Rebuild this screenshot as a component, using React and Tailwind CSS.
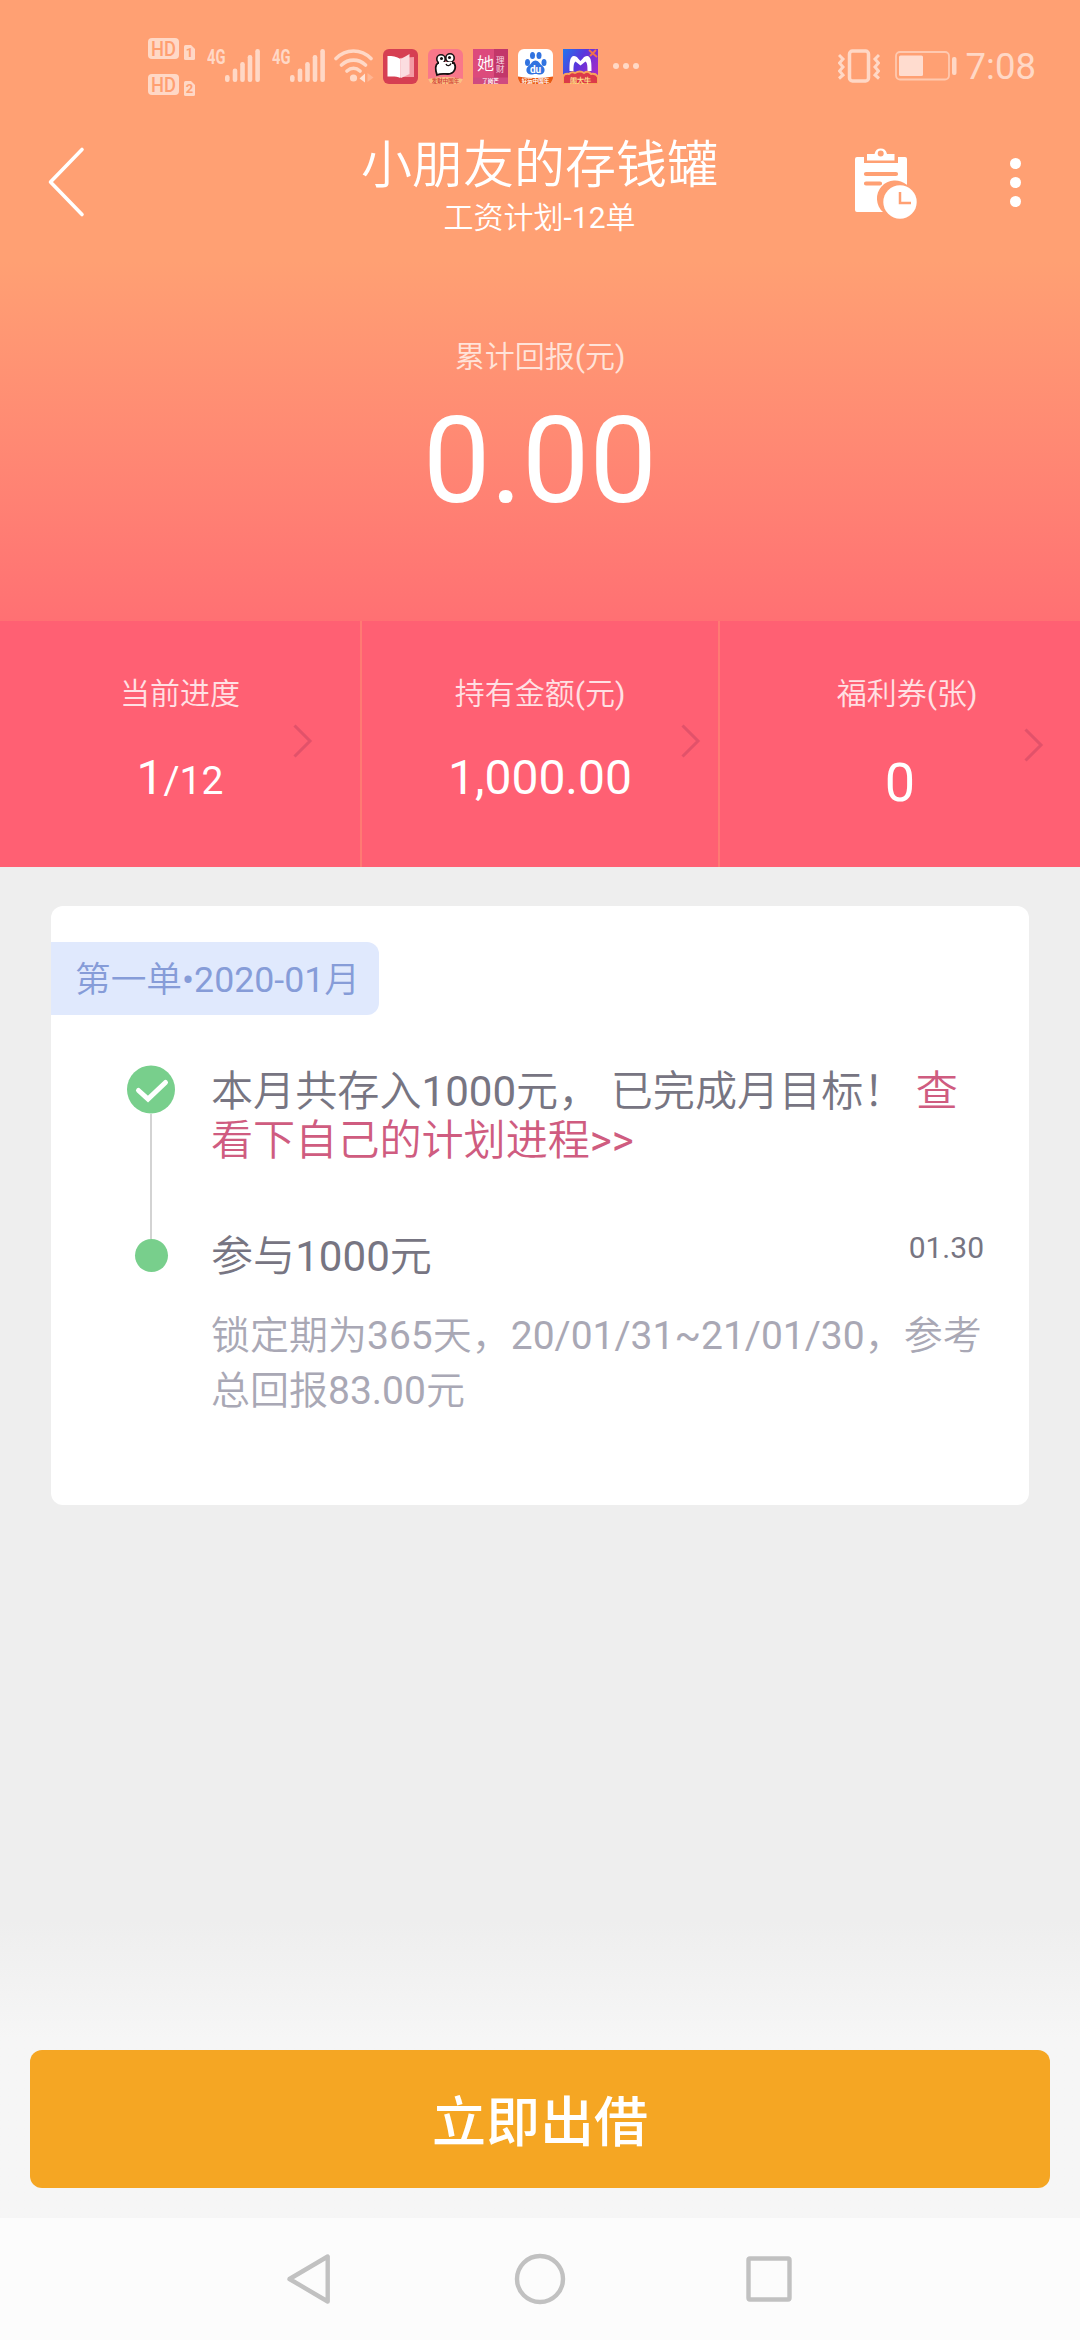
function HdBadge({ sim }) {
  return (
    <svg width="48" height="22" viewBox="0 0 48 22">
      <rect width="31" height="21" rx="4" fill="#ffd8c6" />
      <text x="15.5" y="17.5" textAnchor="middle" fontSize="20" fontWeight="500" textLength="25" lengthAdjust="spacingAndGlyphs" fill="#ff9f71">
        HD
      </text>
      <path d="M37.5 7H43l4 4v9.500a1.500 1.500 0 0 1-1.500 1.500h-8A1.500 1.500 0 0 1 36 20.500v-12A1.500 1.500 0 0 1 37.500 7Z" fill="#ffd8c6" />
      <text x="41.500" y="19" textAnchor="middle" fontSize="13" fontWeight="700" fill="#ff9f71">
        {sim}
      </text>
    </svg>
  );
}

function Signal() {
  return (
    <div className="flex h-[34px] w-[53px]">
      <svg width="53" height="44" viewBox="0 -6 53 44" className="-mt-[6px] shrink-0" fill="#ffd8c6">
        <text x="0" y="14.500" fontSize="20" fontWeight="700" textLength="18.500" lengthAdjust="spacingAndGlyphs">
          4G
        </text>
        <rect x="18" y="26" width="4.600" height="7" rx="2.200" />
        <rect x="25.700" y="19.500" width="4.600" height="13.500" rx="2.200" />
        <rect x="33.200" y="13" width="4.600" height="20" rx="2.200" />
        <rect x="40.700" y="6" width="4.600" height="27" rx="2.200" />
        <rect x="48.300" y="0" width="4.600" height="33" rx="2.200" />
      </svg>
    </div>
  );
}

function Wifi() {
  return (
    <svg width="40" height="34" viewBox="0 0 40 34" fill="none" stroke="#ffd8c6" strokeWidth="3.600" strokeLinecap="round">
      <path d="M2 9.500C12-.5 27-.5 37 9.500M7.500 16c7-6.500 17-6.500 24 0M13 22c4-3.500 9-3.500 13 0" />
      <circle cx="19.500" cy="29" r="3.600" fill="#ffd8c6" stroke="none" />
      <path d="M25.500 29.500l5.500-5v9Z" fill="#ffe3d6" stroke="none" />
      <path d="M39.500 28.500l-6-4.500v9Z" fill="#ffb592" stroke="none" />
    </svg>
  );
}

function AppIcons() {
  return (
    <div className="flex gap-[10px]">
      <svg width="35" height="35" viewBox="0 0 35 35">
        <rect width="35" height="35" rx="6" fill="#d63f52" />
        <path d="M17 9l14-1v20H17Z" fill="#f39ba3" />
        <path d="M4.500 7c5 0 9 .5 13 3v19c-4-2-8-1.500-13-1.500Z" fill="#fff" />
        <path d="M18 10l8.500-5v20L18 29Z" fill="#fbdde0" />
      </svg>
      <svg width="35" height="35" viewBox="0 0 35 35">
        <clipPath id="frog"><rect width="35" height="35" rx="6" /></clipPath>
        <g clipPath="url(#frog)">
          <rect width="35" height="35" fill="#f9778a" />
          <path d="M9 26c-2-6-2-10 1-12h16c3 5 0 11-6 11-4 0-7-1-11 1Z" fill="#fff" stroke="#171112" strokeWidth="1.800" />
          <circle cx="13" cy="10" r="4.200" fill="#fff" stroke="#171112" strokeWidth="1.600" />
          <circle cx="22" cy="9" r="4.200" fill="#fff" stroke="#171112" strokeWidth="1.600" />
          <path d="M11 13h13v5H11Z" fill="#fff" />
          <circle cx="13.500" cy="9.500" r="1.500" fill="#171112" />
          <circle cx="21.500" cy="8.500" r="1.500" fill="#171112" />
          <path d="M18 15c1 2.500 4 2 5-.5" stroke="#171112" strokeWidth="1.400" fill="none" />
          <path d="M0 30q17-4 35 0v5H0Z" fill="#fbc182" />
          <text x="17.500" y="34" textAnchor="middle" fontSize="5.500" fontWeight="700" fill="#d4453c">发财中国年</text>
        </g>
      </svg>
      <svg width="35" height="35" viewBox="0 0 35 35">
        <rect width="35" height="35" fill="#dc4a7c" />
        <rect x="21" width="14" height="35" fill="#c2376a" />
        <path d="M0 28.500h35V35H0Z" fill="#cf4a80" />
        <text x="4" y="21" fontSize="17" fontWeight="500" fill="#fff">她</text>
        <text x="23" y="14" fontSize="8.500" fill="#ffe1eb">理</text>
        <text x="23" y="23" fontSize="8.500" fill="#ffe1eb">财</text>
        <text x="17.500" y="34" textAnchor="middle" fontSize="5.500" fontWeight="700" fill="#fff">了岗芒</text>
      </svg>
      <svg width="35" height="35" viewBox="0 0 35 35">
        <clipPath id="paw"><rect width="35" height="35" rx="6" /></clipPath>
        <g clipPath="url(#paw)">
          <rect width="35" height="35" fill="#fff" />
          <g fill="#3173e0">
            <ellipse cx="9.500" cy="13.500" rx="2.500" ry="3.500" />
            <ellipse cx="14.500" cy="6.500" rx="2.500" ry="3.500" />
            <ellipse cx="21" cy="6.500" rx="2.500" ry="3.500" />
            <ellipse cx="26" cy="13.500" rx="2.500" ry="3.500" />
            <path d="M17.500 11.500c3 0 4 3 6.500 5 5 4 2 9-2 9-2 0-3-.5-4.500-.5s-2.500.5-4.500.5c-4 0-7-5-2-9 2.500-2 3.500-5 6.500-5Z" />
          </g>
          <text x="17.500" y="23.500" textAnchor="middle" fontSize="10" fontWeight="700" fill="#fff">du</text>
          <path d="M0 27.500q17 3 35 0V35H0Z" fill="#ea5a12" />
          <text x="17.500" y="34" textAnchor="middle" fontSize="5.500" fontWeight="700" fill="#fff">好运中国年</text>
        </g>
      </svg>
      <svg width="35" height="35" viewBox="0 0 35 35">
        <defs>
          <linearGradient id="night" x1="0" x2="1" y1="0" y2=".6">
            <stop offset="0" stopColor="#2176ed" />
            <stop offset=".5" stopColor="#5a35dc" />
            <stop offset="1" stopColor="#a32ac8" />
          </linearGradient>
        </defs>
        <rect width="35" height="35" fill="url(#night)" />
        <path d="M6.500 22c0-8 0-14 4-15 3-.5 5 3 7 5 2-2 4-5.500 7-5 4 1 4 7 4 15h-4c0-4 0-8-2-9.500l-5 4-5-4c-2 1.500-2 5.500-2 9.500Z" fill="#fff" />
        <path d="M26 1l8 7M33 1l-6 6" stroke="#f1734b" strokeWidth="1.800" />
        <path d="M0 28q1-4 6-3 3-3 6-1 5-3 9 0 4-3 7 1 5-1 7 3v7H0Z" fill="#dc3a49" stroke="#f8a35b" strokeWidth="2" />
        <text x="17.500" y="33.500" textAnchor="middle" fontSize="7" fontWeight="700" fill="#ffe48c">闹大牛</text>
      </svg>
    </div>
  );
}

function StatusBar() {
  return (
    <div className="flex h-[132px] items-center pl-[148px] pr-[44px]">
      <div className="flex w-[59px] flex-col gap-[14px] pt-[2px]">
        <HdBadge sim="1" />
        <HdBadge sim="2" />
      </div>
      <div className="flex gap-3">
        <Signal />
        <Signal />
      </div>
      <div className="ml-[9px] mr-[9px]">
        <Wifi />
      </div>
      <AppIcons />
      <div className="ml-[15px] flex gap-1">
        <i className="size-[6px] rounded-full bg-[#ffd8c6]" />
        <i className="size-[6px] rounded-full bg-[#ffd8c6]" />
        <i className="size-[6px] rounded-full bg-[#ffd8c6]" />
      </div>
      <svg className="ml-auto" width="42" height="34" viewBox="0 0 42 34" fill="none" stroke="#ffd8c6" strokeWidth="3">
        <rect x="11.500" y="2" width="19" height="30" rx="3" strokeWidth="3.500" />
        <path d="M1 6l4 4-3.500 4L5 18l-3.500 4L5 26l-4 3.500M41 6l-4 4 3.500 4-3.500 4 3.500 4-3.500 4 4 3.500" />
      </svg>
      <svg className="ml-[15px]" width="62" height="30" viewBox="0 0 62 30">
        <rect x="1" y="1" width="53" height="27.500" rx="4" fill="none" stroke="#ffc9b0" strokeWidth="1.800" />
        <rect x="4" y="4.500" width="24" height="20.500" rx="1.500" fill="#ffdccf" />
        <rect x="57" y="6" width="4.500" height="18" rx="2" fill="#ffd8c6" />
      </svg>
      <span className="ml-[9px] mt-[3px] text-[36.500px] leading-none text-[#ffd8c6]">7:08</span>
    </div>
  );
}

function TitleBar() {
  return (
    <div className="flex h-[118px] items-start pl-[47px] pr-[59px]">
      <svg className="mt-[14px]" width="38" height="72" viewBox="0 0 38 72" fill="none" stroke="#fff" strokeWidth="3.600" strokeLinecap="round" strokeLinejoin="round">
        <path d="M35 3.500L3.500 36L35 68.500" />
      </svg>
      <div className="ml-[276px] mt-px flex w-[357px] flex-col items-center text-white">
        <h1 className="text-[51px] leading-[66px] whitespace-nowrap">小朋友的存钱罐</h1>
        <p className="text-[30px] leading-[38px]">工资计划-12单</p>
      </div>
      <div className="ml-auto flex gap-[92px]">
        <svg className="mt-[14px]" width="63" height="74" viewBox="0 0 63 74" fill="#fff">
          <path d="M2 11h7v6h34v-6h7a2 2 0 0 1 2 2v26a18 18 0 0 0-24 27H2a2 2 0 0 1-2-2V13a2 2 0 0 1 2-2Z" />
          <path fillRule="evenodd" d="M12 8h7.500a6.500 7.500 0 0 1 12.500 0h7.500v6.500H12ZM25.700 4.500a3 3 0 1 0 0 6 3 3 0 0 0 0-6Z" />
          <path d="M11 28h30M11 37.500h14" stroke="#ffa073" strokeWidth="4.200" strokeLinecap="round" />
          <circle cx="45" cy="56" r="18.500" fill="#ffa073" />
          <circle cx="45" cy="56" r="16.700" />
          <path d="M45 46v11h11" fill="none" stroke="#ffa073" strokeWidth="2.500" />
        </svg>
        <div className="mt-[26px] flex flex-col gap-2">
          <i className="size-[11px] rounded-full bg-white" />
          <i className="size-[11px] rounded-full bg-white" />
          <i className="size-[11px] rounded-full bg-white" />
        </div>
      </div>
    </div>
  );
}

function Chevron({ className }) {
  return (
    <svg className={className} width="20" height="34" viewBox="0 0 20 34" fill="none" stroke="#e2526a" strokeWidth="3">
      <path d="M1.500 1.500L17 17L1.500 32.500" />
    </svg>
  );
}

function Stats() {
  return (
    <div className="flex h-[246px] bg-[#ff6073] text-white">
      <div className="flex w-[362px] border-r-2 border-[#ff7a73]">
        <div className="ml-[120px] w-[120px] pt-[51px] text-center">
          <p className="text-[30px] leading-[44px] text-[#ffe0e4]">当前进度</p>
          <p className="mt-[34px] text-[39px] leading-[56px] whitespace-nowrap">
            <span className="text-[48px]">1</span>/12
          </p>
        </div>
        <Chevron className="ml-[53px] mt-[103px]" />
      </div>
      <div className="flex w-[358px] border-r-2 border-[#ff7a73]">
        <div className="ml-[78px] w-[200px] pt-[51px] text-center">
          <p className="text-[30px] leading-[44px] text-[#ffe0e4]">持有金额(元)</p>
          <p className="mt-[34px] text-[48px] leading-[56px]">1,000.00</p>
        </div>
        <Chevron className="ml-[41px] mt-[103px]" />
      </div>
      <div className="flex flex-1">
        <div className="ml-[87px] w-[200px] pt-[51px] text-center">
          <p className="text-[30px] leading-[44px] text-[#ffe0e4]">福利券(张)</p>
          <p className="mt-[39px] pr-[14px] text-[54px] leading-[56px]">0</p>
        </div>
        <Chevron className="ml-[17px] mt-[107px]" />
      </div>
    </div>
  );
}

function OrderCard() {
  return (
    <section className="mx-[51px] mt-[39px] h-[599px] rounded-xl bg-white pt-[36px]">
      <div className="flex h-[73px] w-[328px] items-center rounded-r-xl bg-[#e0e9fd] pl-[24px] pt-1 text-[35.700px] whitespace-nowrap text-[#869cd8]">
        第一单•2020-01月
      </div>
      <div className="flex pl-[76px] pt-[50px]">
        <div className="flex w-12 flex-col items-center">
          <svg width="48" height="49" viewBox="0 0 48 49">
            <circle cx="24" cy="24.500" r="24" fill="#78cf8c" />
            <path d="M11.500 25.500L21 34L38.500 17.500" fill="none" stroke="#fff" strokeWidth="5" strokeLinecap="round" />
          </svg>
          <div className="h-[125px] w-[2px] bg-[#d3d3d3]" />
          <div className="size-[33px] rounded-full bg-[#78cf8c]" />
        </div>
        <div className="ml-[36px] w-[773px] pt-[2px] text-[#777582]">
          <p className="text-[42.100px] leading-[49px] whitespace-nowrap">
            本月共存入1000元， 已完成月目标！ <span className="text-[#cf5c80]">查<br />看下自己的计划进程&gt;&gt;</span>
          </p>
          <div className="mt-[63px] flex justify-between">
            <span className="pt-[2px] text-[42.100px] leading-[54px]">参与1000元</span>
            <time className="text-[30px] leading-[40px]">01.30</time>
          </div>
          <p className="mt-[25px] text-[39px] leading-[55px] whitespace-nowrap text-[#a9a8b5]">
            锁定期为365天，20/01/31~21/01/30，参考<br />总回报83.00元
          </p>
        </div>
      </div>
    </section>
  );
}

function NavBar() {
  return (
    <nav className="flex h-[122px] justify-center bg-[#fcfcfc]">
      <svg className="mt-[34px]" width="510" height="54" viewBox="0 0 510 54" fill="none" stroke="#c1c1c1" strokeWidth="4.400" strokeLinejoin="round">
        <path d="M42.700 4.500v45L4.500 27Z" />
        <circle cx="255" cy="27" r="23" />
        <rect x="463.500" y="6.500" width="41" height="41" rx="1.500" />
      </svg>
    </nav>
  );
}

export default function App() {
  return (
    <div className="flex h-[2340px] w-[1080px] flex-col overflow-hidden bg-[#eeeeee] font-['Roboto','Noto_Sans_CJK_SC_DemiLight','Noto_Sans_CJK_SC',sans-serif]">
      <header className="h-[621px] bg-linear-to-b from-[#ffa073] from-42% to-[#ff7073]">
        <StatusBar />
        <TitleBar />
        <div className="flex flex-col items-center pt-[85px] text-white">
          <p className="text-[30px] leading-[44px] text-[#ffe3d9]">累计回报(元)</p>
          <p className="mt-[12px] text-[120px] leading-[140px]">0.00</p>
        </div>
      </header>
      <Stats />
      <OrderCard />
      <div className="mt-auto h-[298px] bg-linear-to-b from-[#eeeeee] to-[#f6f6f6] to-40% px-[30px] pt-[130px]">
        <button className="flex h-[138px] w-full items-center justify-center rounded-xl bg-[#f5a623] pb-[2px] font-['Noto_Sans_CJK_SC',sans-serif] text-[54px] font-medium text-white">
          立即出借
        </button>
      </div>
      <NavBar />
    </div>
  );
}
